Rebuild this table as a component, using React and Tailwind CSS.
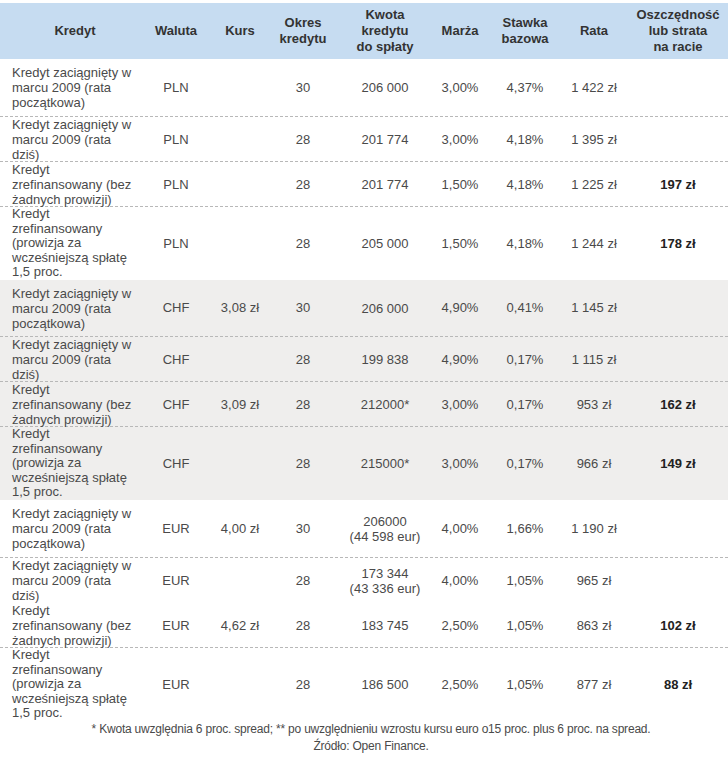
import React from "react";

const T1 = ["Kredyt zaciągnięty w", "marcu 2009 (rata", "początkowa)"];
const T2 = ["Kredyt zaciągnięty w", "marcu 2009 (rata", "dziś)"];
const T3 = ["Kredyt", "zrefinansowany (bez", "żadnych prowizji)"];
const T4 = ["Kredyt", "zrefinansowany", "(prowizja za", "wcześniejszą spłatę", "1,5 proc."];

const groups = [
  {
    bg: "bg-white",
    rows: [
      { t: T1, w: "PLN", k: "", o: "30", q: ["206 000"], m: "3,00%", s: "4,37%", r: "1 422 zł", x: "", h: "h-[58px]", b: true },
      { t: T2, w: "PLN", k: "", o: "28", q: ["201 774"], m: "3,00%", s: "4,18%", r: "1 395 zł", x: "", h: "h-[45px]", b: true },
      { t: T3, w: "PLN", k: "", o: "28", q: ["201 774"], m: "1,50%", s: "4,18%", r: "1 225 zł", x: "197 zł", h: "h-[45px]", b: true },
      { t: T4, w: "PLN", k: "", o: "28", q: ["205 000"], m: "1,50%", s: "4,18%", r: "1 244 zł", x: "178 zł", h: "h-[73px]", b: false },
    ],
  },
  {
    bg: "bg-[#efeeed]",
    rows: [
      { t: T1, w: "CHF", k: "3,08 zł", o: "30", q: ["206 000"], m: "4,90%", s: "0,41%", r: "1 145 zł", x: "", h: "h-[57px]", b: true },
      { t: T2, w: "CHF", k: "", o: "28", q: ["199 838"], m: "4,90%", s: "0,17%", r: "1 115 zł", x: "", h: "h-[45px]", b: true },
      { t: T3, w: "CHF", k: "3,09 zł", o: "28", q: ["212000*"], m: "3,00%", s: "0,17%", r: "953 zł", x: "162 zł", h: "h-[45px]", b: true },
      { t: T4, w: "CHF", k: "", o: "28", q: ["215000*"], m: "3,00%", s: "0,17%", r: "966 zł", x: "149 zł", h: "h-[73px]", b: false },
    ],
  },
  {
    bg: "bg-white",
    rows: [
      { t: T1, w: "EUR", k: "4,00 zł", o: "30", q: ["206000", "(44 598 eur)"], m: "4,00%", s: "1,66%", r: "1 190 zł", x: "", h: "h-[58px]", b: true },
      { t: T2, w: "EUR", k: "", o: "28", q: ["173 344", "(43 336 eur)"], m: "4,00%", s: "1,05%", r: "965 zł", x: "", h: "h-[45px]", b: false },
      { t: T3, w: "EUR", k: "4,62 zł", o: "28", q: ["183 745"], m: "2,50%", s: "1,05%", r: "863 zł", x: "102 zł", h: "h-[45px]", b: true },
      { t: T4, w: "EUR", k: "", o: "28", q: ["186 500"], m: "2,50%", s: "1,05%", r: "877 zł", x: "88 zł", h: "h-[73px]", b: false },
    ],
  },
];

const GRID = "grid grid-cols-[150px_52px_76px_50px_114px_36px_94px_44px_112px]";
const C = "flex items-center justify-center whitespace-nowrap";

function Lines({ items, className = "" }) {
  return (
    <div className={`flex flex-col ${className}`}>
      {items.map((l, i) => (
        <span key={i}>{l}</span>
      ))}
    </div>
  );
}

export default function App() {
  return (
    <div className="w-[728px] h-[760px] bg-white pt-[3px] font-['Liberation_Sans',Arial,sans-serif] text-[13px] leading-[16px] text-[#4a4a4a] overflow-hidden">
      <div className={`${GRID} h-[56px] bg-[#c6dcf1] font-bold text-[#333] text-center`}>
        <div className={C}>Kredyt</div>
        <div className={C}>Waluta</div>
        <div className={C}>Kurs</div>
        <div className={C}><Lines items={["Okres", "kredytu"]} /></div>
        <div className={C}><Lines items={["Kwota", "kredytu", "do spłaty"]} /></div>
        <div className={C}>Marża</div>
        <div className={C}><Lines items={["Stawka", "bazowa"]} /></div>
        <div className={C}>Rata</div>
        <div className={`${C} pl-[12px]`}><Lines items={["Oszczędność", "lub strata", "na racie"]} /></div>
      </div>
      {groups.map((g, gi) => (
        <div key={gi} className={g.bg}>
          {g.rows.map((r, ri) => (
            <div
              key={ri}
              className={`${GRID} ${r.h} ${r.b ? "border-b border-dashed border-[#b8b8b8]" : ""}`}
            >
              <div className="flex items-center pl-[12px] whitespace-nowrap">
                <Lines
                  items={r.t}
                  className={r.t.length > 3 ? "leading-[14.6px]" : "leading-[15px]"}
                />
              </div>
              <div className={C}>{r.w}</div>
              <div className={C}>{r.k}</div>
              <div className={C}>{r.o}</div>
              <div className={`${C} text-center`}><Lines items={r.q} className="leading-[15px]" /></div>
              <div className={C}>{r.m}</div>
              <div className={C}>{r.s}</div>
              <div className={C}>{r.r}</div>
              <div className={`${C} pl-[12px] font-bold text-[#222]`}>{r.x}</div>
            </div>
          ))}
        </div>
      ))}
      <div className="pl-[14px] text-center text-[12px] leading-[17px] tracking-[-0.2px] text-[#4a4a4a]">
        <div>* Kwota uwzględnia 6 proc. spread; ** po uwzględnieniu wzrostu kursu euro o15 proc. plus 6 proc. na spread.</div>
        <div>Źródło: Open Finance.</div>
      </div>
    </div>
  );
}
